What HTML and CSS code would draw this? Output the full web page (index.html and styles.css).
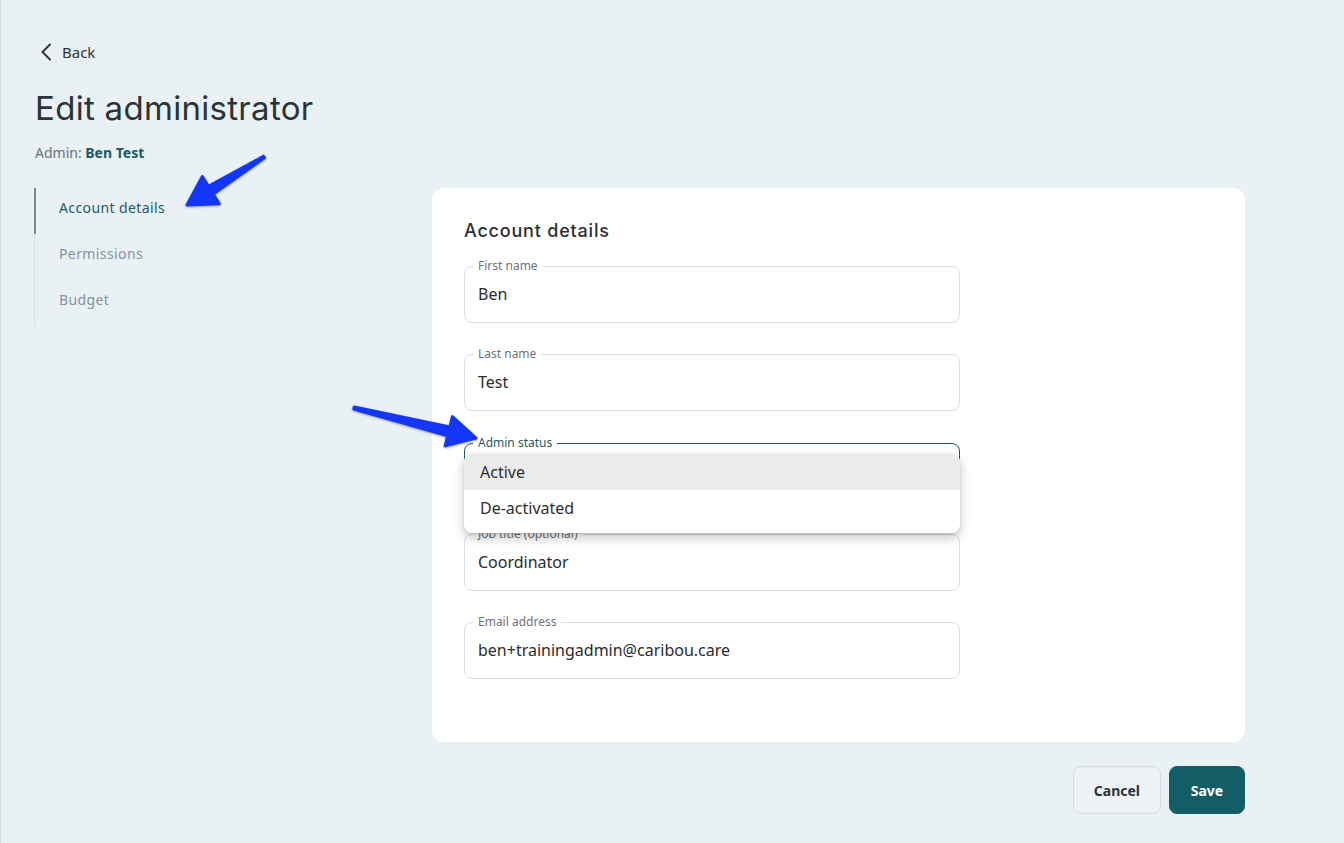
FILE: index.html
```html
<!DOCTYPE html>
<html>

<head>
    <meta charset="UTF-8">
    <title>Edit administrator</title>
    <!-- Styles  -->
    <link rel="stylesheet" href="styles.css">
</head>

<body>
    <div class="page">
        <!-- Header -->
        <a class="back-link" href="#">
            <svg class="back-icon" width="12" height="18" viewBox="0 0 12 18">
                <path d="M10 1.5 L2.5 9 L10 16.5" fill="none" stroke="#2f3437" stroke-width="2" stroke-linecap="round" stroke-linejoin="round" />
            </svg>
            Back
        </a>
        <h1 class="page-title">Edit administrator</h1>
        <p class="admin-name">Admin: <strong>Ben Test</strong></p>

        <div class="layout">
            <!-- Section nav -->
            <nav class="side-nav">
                <a class="nav-item active" href="#">Account details</a>
                <a class="nav-item" href="#">Permissions</a>
                <a class="nav-item" href="#">Budget</a>
            </nav>

            <div class="content">
                <section class="card">
                    <h2 class="card-title">Account details</h2>
                    <form class="fields">
                        <fieldset class="field">
                            <legend>First name</legend>
                            <div class="field-value">Ben</div>
                        </fieldset>
                        <fieldset class="field">
                            <legend>Last name</legend>
                            <div class="field-value">Test</div>
                        </fieldset>

                        <!-- Admin status select, open -->
                        <div class="select-wrap">
                            <fieldset class="field field-select is-focused">
                                <legend>Admin status</legend>
                                <div class="field-value">Active</div>
                            </fieldset>
                            <ul class="menu">
                                <li class="menu-item selected">Active</li>
                                <li class="menu-item">De-activated</li>
                            </ul>
                        </div>

                        <fieldset class="field">
                            <legend>Job title (optional)</legend>
                            <div class="field-value">Coordinator</div>
                        </fieldset>
                        <fieldset class="field">
                            <legend>Email address</legend>
                            <div class="field-value">ben+trainingadmin@caribou.care</div>
                        </fieldset>
                    </form>
                </section>

                <div class="actions">
                    <button class="btn btn-secondary" type="button">Cancel</button>
                    <button class="btn btn-primary" type="button">Save</button>
                </div>
            </div>
        </div>

        <!-- Callout arrows -->
        <svg class="annotations" width="1344" height="843" viewBox="0 0 1344 843">
            <g fill="#1436f7" stroke="#1436f7" stroke-width="3" stroke-linejoin="round">
                <polygon points="186,205 201.3,176.6 207.4,186.4 262.5,156.2 263.5,157.8 212.2,194 218.3,203.8" />
                <polygon points="475,438 451.4,416.7 448.9,427 353.2,407 352.8,409 446.7,435.7 444.2,445.9" />
            </g>
        </svg>
    </div>
</body>

</html>
```

FILE: styles.css
```css
* {
    box-sizing: border-box;
}

body {
    margin: 0;
    background-color: #e9f1f5;
    font-family: "Noto Sans", "Open Sans", sans-serif;
    color: #2b2f33;
}

.page {
    position: relative;
    min-height: 843px;
    padding: 42px 0 0 33px;
    border-left: 1px solid #d6dde2;
}

/* Header */

.back-link {
    display: flex;
    align-items: center;
    gap: 10px;
    height: 20px;
    margin-left: 6px;
    font-size: 15px;
    line-height: 20px;
    color: #2f3437;
    text-decoration: none;
}

.page-title {
    margin: 26px 0 0 1px;
    font-family: "Inter", "Noto Sans", sans-serif;
    font-size: 33px;
    line-height: 40px;
    font-weight: 400;
    letter-spacing: 0.3px;
    color: #2b3336;
}

.admin-name {
    margin: 15px 0 0 1px;
    font-size: 14px;
    line-height: 20px;
    color: #6b7176;
}

.admin-name strong {
    font-weight: 700;
    color: #1b5a62;
}

/* Sidebar + card */

.layout {
    display: grid;
    grid-template-columns: 398px 813px;
    margin-top: 25px;
}

.side-nav {
    align-self: start;
    display: flex;
    flex-direction: column;
    border-left: 1px solid #d7dee3;
}

.nav-item {
    display: flex;
    align-items: center;
    height: 46px;
    margin-left: -1px;
    padding: 0 0 7px 23px;
    border-left: 2px solid transparent;
    font-size: 14px;
    letter-spacing: 0.4px;
    color: #8592a0;
    text-decoration: none;
}

.nav-item.active {
    color: #1d5b63;
    border-left-color: #7b8793;
}

.card {
    background-color: #ffffff;
    border-radius: 12px;
    padding: 31px 32px 63px;
}

.card-title {
    margin: 0 0 16px;
    font-family: "Inter", "Noto Sans", sans-serif;
    font-size: 18px;
    line-height: 24px;
    font-weight: 500;
    letter-spacing: 0.8px;
    color: #2b2f33;
}

.fields {
    display: flex;
    flex-direction: column;
    gap: 24px;
    width: 496px;
}

.field {
    margin: 0;
    min-width: 0;
    padding: 0 13px 16px;
    border: 1px solid #d9dfe5;
    border-radius: 8px;
}

.field legend {
    margin-left: -5px;
    padding: 0 5px;
    font-size: 12px;
    line-height: 14px;
    color: #6f7275;
}

.field-value {
    margin-top: 9px;
    font-size: 16px;
    line-height: 24px;
    color: #2b2b2b;
}

.select-wrap {
    position: relative;
    margin-top: 1px;
}

.field-select .field-value {
    min-height: 27px;
}

.field.is-focused {
    border-color: #1d5b63;
}

.field.is-focused legend {
    color: #1d5b63;
}

.menu {
    position: absolute;
    top: 18px;
    left: 0;
    right: 0;
    z-index: 2;
    margin: 0;
    padding: 0 0 7px;
    list-style: none;
    background-color: #ffffff;
    border-radius: 8px;
    box-shadow: 0 5px 12px rgba(0, 0, 0, 0.22), 0 1px 3px rgba(0, 0, 0, 0.1);
    overflow: hidden;
}

.menu-item {
    height: 36px;
    padding-left: 16px;
    font-size: 16px;
    line-height: 36px;
    color: #2f2f2f;
}

.menu-item.selected {
    background-color: #ebebeb;
}

/* Buttons */

.actions {
    display: flex;
    justify-content: flex-end;
    gap: 8px;
    margin-top: 24px;
}

.btn {
    height: 48px;
    padding: 0 20px;
    border-radius: 8px;
    font-family: "Noto Sans", sans-serif;
    font-size: 14px;
    font-weight: 700;
    cursor: pointer;
}

.btn-secondary {
    background-color: #ecf2f5;
    border: 1px solid #d3dbe0;
    color: #2f3437;
}

.btn-primary {
    min-width: 76px;
    background-color: #135e66;
    border: 1px solid #135e66;
    color: #ffffff;
}

.annotations {
    position: absolute;
    top: 0;
    left: 0;
    pointer-events: none;
    filter: drop-shadow(0 1px 1px rgba(0, 0, 20, 0.35));
}
```
